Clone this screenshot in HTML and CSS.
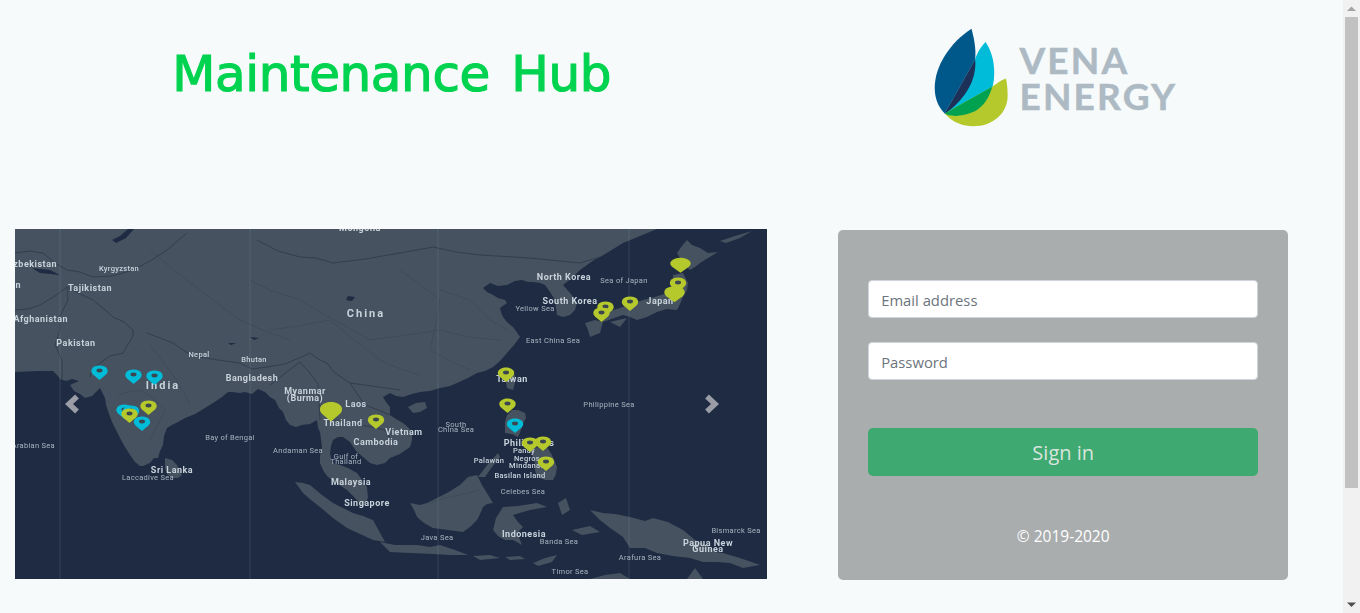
FILE: index.html
```html
<!DOCTYPE html>
<html lang="en">
<head>
  <meta charset="UTF-8">
  <meta name="viewport" content="width=device-width, initial-scale=1.0">
  <title>Maintenance Hub</title>
  <link rel="stylesheet" href="styles.css">
</head>
<body>
  <div class="page">
    <div class="row header">
      <div class="title-col">
        <h1 class="title">Maintenance Hub</h1>
      </div>
      <div class="logo-col">
        <div class="logo">
          <svg class="logo-mark" viewBox="100 50 230 305">
            <path fill="#00bcd9" d="M257 98C240 116 230 135 226 150L135 312C150 322 190 322 225 305C265 285 283 240 283 190C283 150 272 120 257 98Z"/>
            <path fill="#b5c92d" d="M318 207C300 213 288 224 277 232L135 312C160 340 190 350 220 350C280 350 325 310 323 255C323 235 321 220 318 207Z"/>
            <path fill="#00a250" d="M277 232L135 312C150 322 190 322 225 305C250 292 268 265 277 232Z"/>
            <path fill="#00588a" d="M215 58C150 100 105 170 105 235C105 270 118 295 135 312L226 150C229 115 222 85 215 58Z"/>
            <path fill="#1d3057" d="M226 150L135 312C190 275 232 215 226 150Z"/>
          </svg>
          <div class="logo-text">
            <span class="logo-line">VENA</span>
            <span class="logo-line">ENERGY</span>
          </div>
        </div>
      </div>
    </div>

    <div class="row main">
      <div class="map-col">
        <svg class="map" viewBox="15 229 752 350">
          <defs>
            <path id="pin" d="M0 7L-6.5 1.5C-10.5-2.5-7-7.5 0-7.5C7-7.5 10.5-2.5 6.5 1.5Z"/>
            <g id="pin-holed">
              <use href="#pin"/>
              <ellipse cx="0" cy="-2.5" rx="3" ry="1.9" fill="#3b4650"/>
            </g>
          </defs>
          <rect class="sea" x="15" y="229" width="752" height="350"/>

          <g class="land">
            <path d="M15 372L38 371 53 371 58 376 60 379 66 381 72 379 79 381 70 385 74 391 80 394 85 398 92 396 95 393 100 388 102 392 105 398 106 405 109 414 112 422 117 432 121 440 125 447 130 455 135 462 140 466 143 466 150 463 154 458 158 458 160 451 163 445 164 436 167 428 172 425 178 422 185 418 195 414 205 408 213 403 222 397 228 392 232 392 240 393 245 392 252 394 258 389 265 392 270 397 275 400 279 408 283 412 286 420 290 425 296 427 302 425 310 424 317 420 318 428 320 432 322 447 320 456 320 463 324 472 328 477 338 484 347 490 355 498 363 507 368 498 367 487 362 480 357 473 348 468 340 465 332 463 330 453 331 446 333 440 338 437 343 437 350 442 356 451 363 457 370 463 377 465 385 463 390 458 400 454 410 447 412 440 412 433 408 427 403 423 396 419 390 415 390 407 386 402 383 397 390 393 396 396 403 397 412 394 420 392 430 391 440 388 450 386 457 383 468 378 477 373 485 371 493 367 500 361 507 353 514 345 520 337 516 331 513 327 507 322 503 317 501 312 500 308 507 303 505 300 498 298 493 295 487 292 483 288 490 283 498 286 507 285 515 281 522 280 528 282 533 282 540 283 545 285 550 292 555 300 556 308 557 315 563 317 570 315 575 310 577 303 571 294 563 285 572 278 580 270 587 265 594 260 600 257 610 251 623 243 640 236 657 229 15 229Z"/>
            <path d="M165 458L172 460 177 465 182 475 178 478 172 478 167 474 165 468Z"/>
            <path d="M408 407L416 403 425 402 427 408 420 412 413 413Z"/>
            <path d="M295 482L303 483 310 485 322 495 333 503 343 508 353 513 363 516 373 520 379 531 385 542 373 540 360 534 347 528 333 518 320 507 311 500 303 493Z"/>
            <path d="M410 503L420 505 427 503 437 498 447 493 460 485 468 477 477 475 482 485 493 503 487 504 483 507 480 514 477 520 470 527 463 532 448 530 433 528 424 523 417 517 414 510Z"/>
            <path d="M493 530L496 518 503 507 518 506 537 503 547 507 530 510 513 515 518 522 523 527 517 533 520 540 522 545 513 540 505 540 498 536Z"/>
            <path d="M380 542L395 545 417 545 430 547 440 545 455 550 468 555 450 555 433 554 410 553 390 552Z"/>
            <path d="M473 556L490 555 500 558 480 560Z"/>
            <path d="M505 557L520 556 525 559 510 560Z"/>
            <path d="M533 563L545 558 557 555 552 562 538 566Z"/>
            <path d="M590 510L603 513 615 514 630 517 645 521 653 518 668 522 683 530 695 540 707 545 715 552 723 553 740 558 760 565 743 568 730 563 717 562 703 562 690 558 673 556 657 553 645 548 630 548 623 537 616 532 610 528 600 520Z"/>
            <path d="M590 579L605 575 620 573 630 579Z"/>
            <path d="M687 579L695 568 703 579Z"/>
            <path d="M677 253L682 246 687 240 692 245 700 248 708 253 718 252 708 258 700 263 695 267 690 270 683 263Z"/>
            <path d="M673 275L683 273 688 283 687 290 683 297 680 304 677 310 667 309 657 312 647 317 637 320 630 317 623 315 617 317 603 322 603 313 610 311 620 308 632 304 643 300 655 297 667 293 673 285Z"/>
            <path d="M610 322L618 320 627 318 620 327Z"/>
            <path d="M585 323L595 320 603 322 600 333 590 337 588 330Z"/>
            <path d="M505 377L510 374 515 375 515 383 513 390 507 388Z"/>
            <path d="M505 422L507 415 512 410 518 410 525 413 526 418 523 423 521 430 518 437 512 434 505 433Z"/>
            <path d="M530 450L538 447 547 447 552 455 557 467 556 474 553 480 545 480 537 477 535 470 535 463Z"/>
            <path d="M478 477L488 464 498 453 500 457 492 467 485 477Z"/>
            <path d="M558 503L566 498 570 510 562 515Z"/>
            <path d="M572 530L590 526 600 532 582 535Z"/>
            <path d="M720 241L735 236 752 231 740 238 726 243Z"/>
          </g>

          <g class="lakes">
            <path d="M112 240L120 236 128 229 134 229 126 238 116 243Z"/>
            <path d="M348 296L355 297 352 301 346 300Z"/>
            <path d="M32 268L50 270 60 275 40 273Z"/>
            <path d="M250 337L259 338 254 340Z"/>
            <path d="M228 343L236 343 231 345Z"/>
          </g>

          <g class="borders">
            <polyline points="147,333 160,338 173,343 186,352 200,357 218,360 240,363 252,369 267,367 285,364 299,358 310,353 318,359 327,363 335,373 350,383 372,386 400,390"/>
            <polyline points="67,287 80,294 93,300 104,309 113,317 124,322 133,330 133,336 123,353 110,356 100,363 92,370 90,377"/>
            <polyline points="15,253 30,251 43,253 55,263 67,270 80,272 93,277 112,276 133,270 150,261 167,250 175,243 187,233"/>
            <polyline points="15,310 28,309 40,305 55,296 67,287 68,300 60,316 60,330 55,345 62,360 62,380"/>
            <polyline points="257,240 278,251 300,257 316,258 333,263 365,259 400,253 433,247 456,252 480,255 530,258 580,263 600,257"/>
            <polyline points="270,385 283,375 292,368 300,362 309,372 318,384 319,400 320,420"/>
            <polyline points="350,383 358,395 365,405 378,410 390,415"/>
            <polyline points="335,420 347,424 360,425 372,427 385,430 395,445"/>
            <polyline class="minor" points="150,345 160,358 175,378 183,391 190,405"/>
            <polyline class="minor" points="118,395 129,392 140,390 153,398 165,410 158,425 150,440"/>
            <polyline class="minor" points="250,280 272,291 300,300 320,312 345,326 370,340 400,336 440,330 468,337 500,340"/>
            <polyline class="minor" points="400,270 418,283 440,300 436,324 430,350 448,360 470,370"/>
            <polyline class="minor" points="270,330 298,326 330,320 352,338 380,360 398,368 420,375"/>
            <polyline class="minor" points="150,250 175,271 200,290 218,304 240,320 262,330 290,340"/>
            <polyline class="minor" points="440,290 470,300 490,320 508,330"/>
            <polyline class="minor" points="430,503 445,498 460,495 480,490"/>
          </g>

          <g class="meridians">
            <line x1="60" y1="229" x2="60" y2="579"/>
            <line x1="250" y1="229" x2="250" y2="579"/>
            <line x1="438" y1="229" x2="438" y2="579"/>
            <line x1="629" y1="229" x2="629" y2="579"/>
          </g>

          <g class="labels">
            <text class="lbl-m" x="360" y="231">Mongolia</text>
            <text class="lbl-m end" x="57" y="267">Uzbekistan</text>
            <text class="lbl-s bright" x="119" y="271">Kyrgyzstan</text>
            <text class="lbl-m" x="90" y="291">Tajikistan</text>
            <text class="lbl-m end" x="21" y="288">Turkmenistan</text>
            <text class="lbl-m end" x="68" y="322">Afghanistan</text>
            <text class="lbl-m" x="76" y="346">Pakistan</text>
            <text class="lbl-s bright" x="199" y="357">Nepal</text>
            <text class="lbl-s bright" x="254" y="362">Bhutan</text>
            <text class="lbl-m" x="252" y="381">Bangladesh</text>
            <text class="lbl-l" x="163" y="389">India</text>
            <text class="lbl-l" x="366" y="317">China</text>
            <text class="lbl-m" x="305" y="394">Myanmar</text>
            <text class="lbl-m" x="305" y="401">(Burma)</text>
            <text class="lbl-m" x="356" y="407">Laos</text>
            <text class="lbl-m" x="343" y="426">Thailand</text>
            <text class="lbl-m" x="376" y="445">Cambodia</text>
            <text class="lbl-m" x="404" y="435">Vietnam</text>
            <text class="lbl-s" x="230" y="440">Bay of Bengal</text>
            <text class="lbl-s" x="298" y="453">Andaman Sea</text>
            <text class="lbl-s" x="346" y="459">Gulf of</text>
            <text class="lbl-s" x="346" y="464">Thailand</text>
            <text class="lbl-s end" x="55" y="448">Arabian Sea</text>
            <text class="lbl-m" x="172" y="473">Sri Lanka</text>
            <text class="lbl-s" x="148" y="480">Laccadive Sea</text>
            <text class="lbl-m" x="351" y="485">Malaysia</text>
            <text class="lbl-m" x="367" y="506">Singapore</text>
            <text class="lbl-s" x="456" y="427">South</text>
            <text class="lbl-s" x="456" y="432">China Sea</text>
            <text class="lbl-s bright" x="489" y="463">Palawan</text>
            <text class="lbl-m" x="529" y="446">Philippines</text>
            <text class="lbl-s bright" x="524" y="453">Panay</text>
            <text class="lbl-s bright" x="527" y="461">Negros</text>
            <text class="lbl-s bright" x="527" y="468">Mindanao</text>
            <text class="lbl-s bright" x="520" y="478">Basilan Island</text>
            <text class="lbl-s" x="523" y="494">Celebes Sea</text>
            <text class="lbl-s" x="437" y="540">Java Sea</text>
            <text class="lbl-m" x="524" y="537">Indonesia</text>
            <text class="lbl-s" x="559" y="544">Banda Sea</text>
            <text class="lbl-s" x="640" y="560">Arafura Sea</text>
            <text class="lbl-s" x="570" y="574">Timor Sea</text>
            <text class="lbl-m" x="708" y="546">Papua New</text>
            <text class="lbl-m" x="708" y="552">Guinea</text>
            <text class="lbl-s" x="736" y="533">Bismarck Sea</text>
            <text class="lbl-s" x="609" y="407">Philippine Sea</text>
            <text class="lbl-s" x="553" y="343">East China Sea</text>
            <text class="lbl-s" x="535" y="311">Yellow Sea</text>
            <text class="lbl-m" x="570" y="304">South Korea</text>
            <text class="lbl-s" x="624" y="283">Sea of Japan</text>
            <text class="lbl-m" x="564" y="280">North Korea</text>
            <text class="lbl-m" x="660" y="304">Japan</text>
            <text class="lbl-m" x="512" y="382">Taiwan</text>
          </g>

          <g class="pins-cyan">
            <use href="#pin-holed" x="99.5" y="373"/>
            <use href="#pin-holed" x="133.5" y="377"/>
            <use href="#pin-holed" x="154.5" y="378"/>
            <use href="#pin-holed" x="124.5" y="412"/>
            <use href="#pin-holed" x="131" y="413"/>
            <use href="#pin-holed" x="142" y="424"/>
          </g>
          <g class="pins-lime">
            <use href="#pin-holed" x="129.5" y="416"/>
            <use href="#pin-holed" x="148.5" y="408"/>
            <use href="#pin-holed" x="376" y="422"/>
            <use href="#pin" transform="translate(331 412) scale(1.35)"/>
            <use href="#pin" transform="translate(680.5 265.5) scale(1.25 1.05)"/>
            <use href="#pin-holed" x="678" y="285"/>
            <use href="#pin" transform="translate(674.5 294.5) scale(1.25 1.1)"/>
            <use href="#pin-holed" x="605.5" y="309"/>
            <use href="#pin-holed" x="601.5" y="315"/>
            <use href="#pin-holed" x="630" y="304"/>
            <use href="#pin-holed" x="506" y="375"/>
            <use href="#pin-holed" x="507.5" y="406"/>
          </g>
          <g class="pins-cyan">
            <use href="#pin-holed" x="515" y="426"/>
          </g>
          <g class="pins-lime">
            <use href="#pin-holed" x="530" y="445"/>
            <use href="#pin-holed" x="543" y="444"/>
            <use href="#pin-holed" x="546" y="464"/>
          </g>

          <polyline class="chevron" points="77,396.5 69,404 77,411.5"/>
          <polyline class="chevron" points="707,396.5 715,404 707,411.5"/>
        </svg>
      </div>

      <div class="form-col">
        <form class="panel">
          <input class="field" type="email" placeholder="Email address">
          <input class="field" type="password" placeholder="Password">
          <button class="submit" type="submit">Sign in</button>
          <p class="copy">© 2019-2020</p>
        </form>
      </div>
    </div>
  </div>

  <div class="scrollbar">
    <svg class="scroll-btn" viewBox="0 0 17 17"><path fill="#a3a3a3" d="M8.5 6.5L13 11H4Z"/></svg>
    <div class="scroll-track"><div class="scroll-thumb"></div></div>
    <svg class="scroll-btn" viewBox="0 0 17 17"><path fill="#505050" d="M4 6.5H13L8.5 11Z"/></svg>
  </div>
</body>
</html>
```

FILE: styles.css
```css
html, body {
  height: 100%;
}
body {
  display: flex;
  margin: 0;
  overflow: hidden;
  background: #f6fafb;
  font-family: "Open Sans", "Noto Sans", sans-serif;
}
.page {
  flex: 1;
}

.scrollbar {
  display: flex;
  flex-direction: column;
  flex: 0 0 17px;
  background: #f1f1f1;
}
.scroll-btn {
  display: block;
  width: 17px;
  height: 17px;
}
.scroll-track {
  flex: 1;
  padding: 0 2px;
}
.scroll-thumb {
  height: 471px;
  background: #c1c1c1;
}

.row {
  display: grid;
  grid-template-columns: 7fr 5fr;
}
.header {
  height: 229px;
}
.title-col {
  display: flex;
  justify-content: center;
  padding-top: 38px;
}
.title {
  margin: 0;
  font-family: "DejaVu Sans", sans-serif;
  font-size: 50px;
  font-weight: 400;
  line-height: 72px;
  letter-spacing: -0.4px;
  word-spacing: 6px;
  color: #00d34f;
  -webkit-text-stroke: 1.2px #00d34f;
}
.logo-col {
  padding: 26px 0 0 150px;
}
.logo {
  display: flex;
  align-items: flex-start;
  gap: 9px;
}
.logo-mark {
  width: 77px;
  height: 102px;
}
.logo-text {
  display: flex;
  flex-direction: column;
  padding-top: 16px;
  font-family: Lato, sans-serif;
  font-size: 37px;
  font-weight: 700;
  line-height: 36px;
  letter-spacing: 2.2px;
  color: #adbac4;
  -webkit-text-stroke: 0.5px #adbac4;
}
.logo-line {
  display: block;
}

.map-col {
  padding: 0 15px;
}
.map {
  display: block;
  width: 752px;
  height: 350px;
  filter: blur(0.5px);
}
.sea {
  fill: #1e2b43;
}
.land {
  fill: #46525f;
}
.lakes {
  fill: #1e2b43;
}
.borders {
  fill: none;
  stroke: #2b3546;
  stroke-width: 0.7;
}
.borders .minor {
  stroke: #3a4553;
  stroke-width: 0.5;
}
.meridians {
  stroke: #7f93a8;
  stroke-opacity: 0.22;
  stroke-width: 1;
}
.labels text {
  font-family: Roboto, sans-serif;
  text-anchor: middle;
  fill: #c9d3dc;
}
.labels .end {
  text-anchor: end;
}
.lbl-l {
  font-size: 11px;
  font-weight: 700;
  letter-spacing: 2px;
}
.lbl-m {
  font-size: 9px;
  font-weight: 700;
  letter-spacing: 0.5px;
}
.lbl-s {
  font-size: 7.5px;
  font-weight: 400;
  letter-spacing: 0.3px;
  opacity: 0.8;
}
.lbl-s.bright {
  font-weight: 500;
  opacity: 1;
}
.pins-cyan {
  fill: #00bcd8;
}
.pins-lime {
  fill: #b5c92d;
}
.chevron {
  fill: none;
  stroke: #9a9ca6;
  stroke-width: 5.5;
}

.form-col {
  display: flex;
  justify-content: center;
  padding-top: 1px;
}
.panel {
  display: flex;
  flex-direction: column;
  box-sizing: border-box;
  width: 450px;
  height: 350px;
  padding: 50px 30px 0;
  background: #a9adae;
  border-radius: 5px;
}
.field {
  box-sizing: border-box;
  height: 38px;
  margin-bottom: 24px;
  padding: 7px 12px 5px;
  font-family: inherit;
  font-size: 14.8px;
  color: #495057;
  background: #fff;
  border: 1px solid #ced4da;
  border-radius: 4px;
}
.field::placeholder {
  color: #6c757d;
  opacity: 1;
}
.submit {
  height: 48px;
  margin-top: 24px;
  font-family: inherit;
  font-size: 20px;
  color: #d9e5de;
  background: #3fa972;
  border: 0;
  border-radius: 5px;
}
.copy {
  margin: 48px 0 0;
  font-size: 15.5px;
  line-height: 24px;
  text-align: center;
  color: #fff;
}
```
